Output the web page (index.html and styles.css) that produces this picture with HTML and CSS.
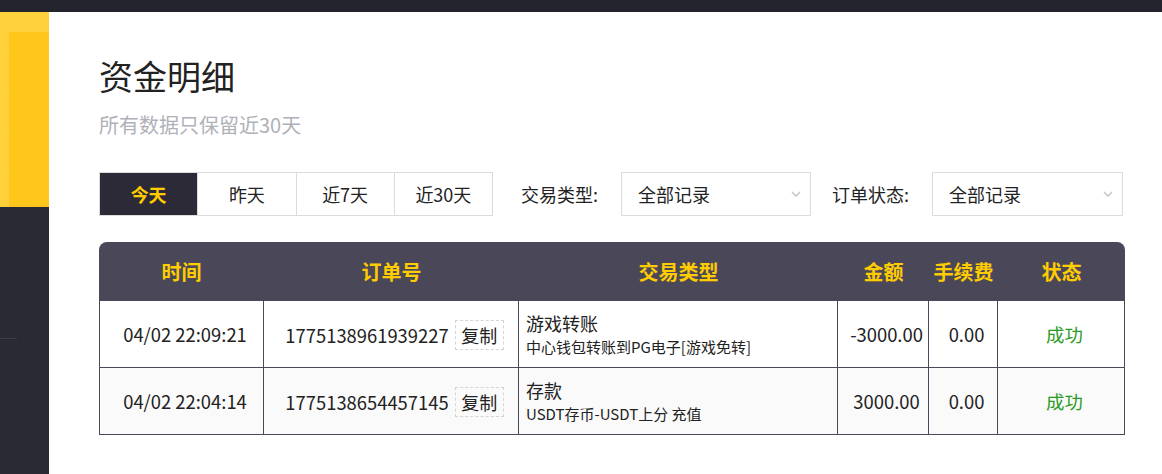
FILE: index.html
```html
<!DOCTYPE html>
<html lang="zh-CN">
<head>
<meta charset="utf-8">
<title>资金明细</title>
<link rel="stylesheet" href="styles.css">
</head>
<body>
<div class="topbar"></div>
<div class="layout">
  <aside class="sidebar">
    <div class="promo"><div class="promo-inner"></div></div>
    <div class="side-line"></div>
  </aside>
  <main class="main">
    <h1 class="title">资金明细</h1>
    <p class="subtitle">所有数据只保留近30天</p>
    <div class="filters">
      <div class="tabs">
        <div class="tab active">今天</div>
        <div class="tab">昨天</div>
        <div class="tab">近7天</div>
        <div class="tab">近30天</div>
      </div>
      <div class="field field-type">
        <span class="label">交易类型:</span>
        <div class="select select-a">
          <span>全部记录</span>
          <svg class="chev" width="10" height="7" viewBox="0 0 10 7"><polyline points="1,1 5,5 9,1" fill="none" stroke="#c9c9cc" stroke-width="1.6"/></svg>
        </div>
      </div>
      <div class="field field-status">
        <span class="label">订单状态:</span>
        <div class="select select-b">
          <span>全部记录</span>
          <svg class="chev" width="10" height="7" viewBox="0 0 10 7"><polyline points="1,1 5,5 9,1" fill="none" stroke="#c9c9cc" stroke-width="1.6"/></svg>
        </div>
      </div>
    </div>
    <table class="records">
      <colgroup>
        <col class="c1"><col class="c2"><col class="c3"><col class="c4"><col class="c5"><col class="c6">
      </colgroup>
      <thead>
        <tr><th>时间</th><th>订单号</th><th>交易类型</th><th>金额</th><th>手续费</th><th>状态</th></tr>
      </thead>
      <tbody>
        <tr>
          <td>04/02 22:09:21</td>
          <td><span class="order">1775138961939227</span><span class="copy">复制</span></td>
          <td class="type"><div class="t1">游戏转账</div><div class="t2">中心钱包转账到PG电子[游戏免转]</div></td>
          <td>-3000.00</td>
          <td>0.00</td>
          <td class="ok">成功</td>
        </tr>
        <tr class="alt">
          <td>04/02 22:04:14</td>
          <td><span class="order">1775138654457145</span><span class="copy">复制</span></td>
          <td class="type"><div class="t1">存款</div><div class="t2">USDT存币-USDT上分 充值</div></td>
          <td>3000.00</td>
          <td>0.00</td>
          <td class="ok">成功</td>
        </tr>
      </tbody>
    </table>
  </main>
</div>
</body>
</html>
```
FILE: styles.css
```css
* { box-sizing: border-box; }
html, body { margin: 0; padding: 0; height: 100%; }
body {
  font-family: "Microsoft YaHei", "Noto Sans CJK SC", "Noto Sans", sans-serif;
  color: #222;
  background: #fff;
  overflow: hidden;
}
.topbar { height: 12px; background: #24242e; }
.layout { display: flex; height: 462px; }
.sidebar {
  width: 49px;
  flex: none;
  background: #2a2a35;
  display: flex;
  flex-direction: column;
}
.promo {
  height: 195px;
  background: #ffd23c;
  padding: 20px 0 0 9px;
}
.promo-inner {
  height: 175px;
  background-color: #ffc71c;
  background-image: radial-gradient(circle, rgba(255,180,0,0.35) 1px, transparent 1.6px);
  background-size: 10px 10px;
}
.side-line {
  margin-top: 131px;
  width: 17px;
  height: 1px;
  background: #3d3d4a;
}
.main {
  flex: 1;
  padding: 42px 37px 0 50px;
}
.title {
  margin: 0;
  font-size: 34px;
  line-height: 44px;
  font-weight: normal;
  color: #222;
}
.subtitle {
  margin: 13px 0 0;
  font-size: 20px;
  line-height: 28px;
  color: #afb1b9;
}
.filters {
  margin-top: 33px;
  display: flex;
  align-items: center;
  height: 44px;
}
.tabs {
  display: flex;
  width: 394px;
  height: 44px;
  border: 1px solid #dcdcdc;
}
.tab {
  flex: 1;
  display: flex;
  align-items: center;
  justify-content: center;
  font-size: 18px;
  color: #222;
}
.tab + .tab { border-left: 1px solid #dcdcdc; }
.tab.active {
  background: #2b2a36;
  color: #ffcc00;
  font-weight: bold;
}
.field { display: flex; align-items: center; }
.field-type { margin-left: 28px; }
.field-status { margin-left: 21px; }
.label { font-size: 18px; color: #222; margin-right: 23px; }
.select {
  height: 44px;
  border: 1px solid #dcdcdc;
  display: flex;
  align-items: center;
  justify-content: space-between;
  padding: 0 9px 0 16px;
  font-size: 18px;
  color: #222;
}
.select-a { width: 190px; }
.select-b { width: 191px; }
.chev { display: block; }
.records {
  margin-top: 26px;
  width: 1026px;
  table-layout: fixed;
  border-collapse: separate;
  border-spacing: 0;
}
.c1 { width: 165px; }
.c2 { width: 255px; }
.c3 { width: 319px; }
.c4 { width: 91px; }
.c5 { width: 69px; }
.c6 { width: 127px; }
.records th {
  height: 59px;
  background: #4a4858;
  color: #ffcc00;
  font-size: 20px;
  font-weight: bold;
  text-align: center;
  padding: 0;
}
.records th:first-child { border-top-left-radius: 8px; }
.records th:last-child { border-top-right-radius: 8px; }
.records td {
  height: 67px;
  padding: 0 0 0 7px;
  text-align: center;
  font-size: 18.4px;
  color: #222;
  border-right: 1px solid #4a4858;
  border-bottom: 1px solid #4a4858;
  background: #fff;
}
.records td:first-child { border-left: 1px solid #4a4858; }
.records tr.alt td { background: #fafafa; }
.order { vertical-align: middle; }
.copy {
  display: inline-block;
  vertical-align: middle;
  margin-left: 6px;
  width: 49px;
  height: 30px;
  line-height: 28px;
  border: 1px dashed #d4d4d4;
  font-size: 18px;
  text-align: center;
}
.records td.type { text-align: left; padding-left: 7px; }
.t1 { font-size: 18px; line-height: 26px; }
.t2 { font-size: 15px; line-height: 22px; }
.records td.ok { color: #2b9a25; }
```
